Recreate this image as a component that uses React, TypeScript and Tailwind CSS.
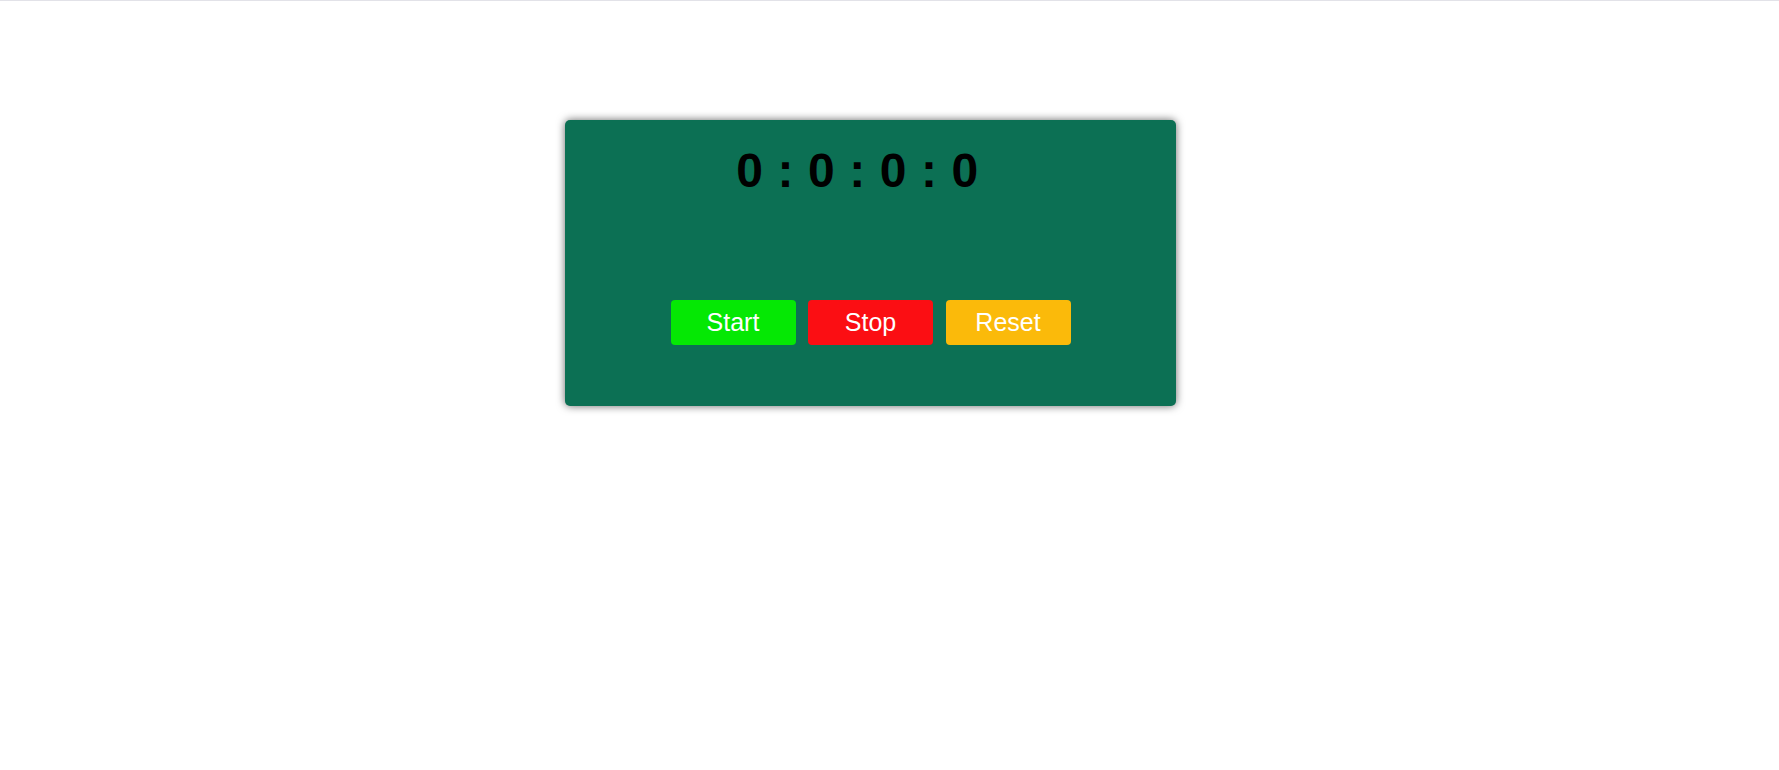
export default function App() {
  return (
    <div className="min-h-screen bg-white border-t border-[#e2e2e8] font-['Liberation_Sans',Arial,sans-serif]">
      <div className="flex justify-center pt-[119px] pr-[38px]">
        {/* Stopwatch card */}
        <div className="w-[611px] h-[286px] bg-[#0c7054] rounded-[5px] shadow-[0_0_9px_rgba(0,0,0,0.6)] flex flex-col items-center">
          <h1 className="mt-[27px] pr-[26px] text-[48px] leading-[48px] font-bold text-black tracking-[0.6px]">
            0 : 0 : 0 : 0
          </h1>

          <div className="mt-[105px] flex gap-[12.5px]">
            <button className="w-[125px] h-[45px] rounded-[4px] bg-[#05e804] text-white text-[25px]">
              Start
            </button>
            <button className="w-[125px] h-[45px] rounded-[4px] bg-[#fb0e13] text-white text-[25px]">
              Stop
            </button>
            <button className="w-[125px] h-[45px] rounded-[4px] bg-[#fbba0a] text-white text-[25px]">
              Reset
            </button>
          </div>
        </div>
      </div>
    </div>
  );
}
